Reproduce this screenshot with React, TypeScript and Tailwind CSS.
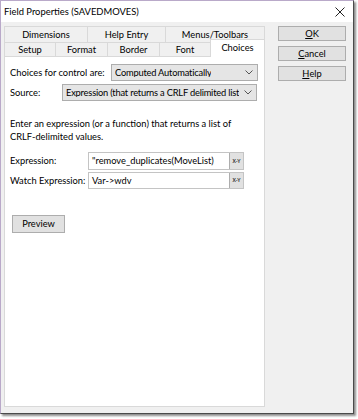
import React from "react";

const font = { fontFamily: 'Lato, "Noto Sans", sans-serif' };

function Chevron() {
    return (
        <svg width="8" height="5" viewBox="0 0 8 5" className="shrink-0">
            <polyline points="0.5,0.5 4,4 7.5,0.5" fill="none" stroke="#555" strokeWidth="1" />
        </svg>
    );
}

function Combo({ text, className }: { text: string; className: string }) {
    return (
        <div className={`flex items-center justify-between gap-[2px] bg-[#e5e5e5] border border-[#adadad] pl-[3px] pr-[4px] ${className}`}>
            <span className="whitespace-nowrap overflow-hidden tracking-[-0.2px]">{text}</span>
            <Chevron />
        </div>
    );
}

function XYButton() {
    return (
        <div className="w-[14px] h-full bg-[#e1e1e1] border-l border-[#adadad] flex items-center justify-center text-[5px] font-bold text-[#333] leading-none">
            X-Y
        </div>
    );
}

function DlgButton({ children }: { children: React.ReactNode }) {
    return (
        <div className="h-[15px] w-[68px] bg-[#e1e1e1] border border-[#adadad] flex items-center justify-center">
            {children}
        </div>
    );
}

const backTabs = [
    { label: "Dimensions", w: "w-[83px]" },
    { label: "Help Entry", w: "w-[78px]" },
    { label: "Menus/Toolbars", w: "w-[100px]" },
];

const frontTabs = [
    { label: "Setup", w: "w-[51px]" },
    { label: "Format", w: "w-[52px]" },
    { label: "Border", w: "w-[52px]" },
    { label: "Font", w: "w-[51px]" },
];

export default function App() {
    return (
        <div className="w-[358px] h-[419px] bg-white text-[9.3px] text-black leading-none whitespace-nowrap" style={font}>
            <div className="w-[354px] h-[414px] bg-[#f0f0f0] border border-[#b9a9c9] border-r-[#4a4a4a] border-b-[#4a4a4a] shadow-[2px_2px_2px_rgba(0,0,0,0.45)] flex flex-col">
                {/* title bar */}
                <div className="h-[21px] bg-white flex items-center justify-between pl-[3px] pr-[8px] shrink-0">
                    <span className="text-[9.4px]">Field Properties (SAVEDMOVES)</span>
                    <svg width="10" height="10" viewBox="0 0 10 10">
                        <path d="M0.5 0.5 L9.5 9.5 M9.5 0.5 L0.5 9.5" stroke="#222" strokeWidth="1" />
                    </svg>
                </div>

                <div className="flex flex-1 pl-[3px] pt-[4px]">
                    {/* tabs + panel */}
                    <div className="flex flex-col w-[261px]">
                        <div className="flex h-[16px]">
                            {backTabs.map((t, i) => (
                                <div
                                    key={t.label}
                                    className={`${t.w} h-full bg-[#f0f0f0] border-t border-l border-[#d9d9d9] ${i === backTabs.length - 1 ? "border-r" : ""} flex items-center justify-center`}
                                >
                                    {t.label}
                                </div>
                            ))}
                        </div>
                        <div className="flex h-[14px] relative z-10">
                            {frontTabs.map((t) => (
                                <div key={t.label} className={`${t.w} h-full bg-[#f0f0f0] border-t border-l border-[#d9d9d9] flex items-center justify-center`}>
                                    {t.label}
                                </div>
                            ))}
                            <div className="w-[55px] h-[18px] -mt-[3px] bg-white border-t border-l border-r border-[#d9d9d9] flex items-center justify-center pb-[2px]">
                                Choices
                            </div>
                        </div>
                        <div className="h-[351px] bg-white border border-[#d9d9d9] pl-[5px] pt-[7px] flex flex-col">
                            <div className="flex items-center h-[17px]">
                                <span className="w-[101px]">Choices for control are:</span>
                                <Combo text="Computed Automatically" className="w-[147px] h-[17px]" />
                            </div>
                            <div className="flex items-center h-[17px] mt-[3px]">
                                <span className="w-[52px]">Source:</span>
                                <Combo text="Expression (that returns a CRLF delimited list" className="w-[195px] h-[17px]" />
                            </div>
                            <p className="mt-[16px] leading-[13px]">
                                Enter an expression (or a function) that returns a list of
                                <br />
                                CRLF-delimited values.
                            </p>
                            <div className="flex items-center h-[18px] mt-[9px]">
                                <span className="w-[78px]">Expression:</span>
                                <div className="w-[156px] h-full flex bg-white border border-[#c4c4c4]">
                                    <span className="flex-1 pl-[3px] flex items-center">"remove_duplicates(MoveList)</span>
                                    <XYButton />
                                </div>
                            </div>
                            <div className="flex items-center h-[17px] mt-[2px]">
                                <span className="w-[78px]">Watch Expression:</span>
                                <div className="w-[156px] h-full flex bg-white border border-[#c4c4c4]">
                                    <span className="flex-1 pl-[3px] flex items-center">Var-&gt;wdv</span>
                                    <XYButton />
                                </div>
                            </div>
                            <div className="mt-[26px] ml-[2px] w-[53px] h-[18px] bg-[#e1e1e1] border border-[#adadad] flex items-center justify-center">
                                Preview
                            </div>
                        </div>
                    </div>

                    {/* dialog buttons */}
                    <div className="ml-[13px] flex flex-col gap-[5px]">
                        <DlgButton>
                            <span className="underline">O</span>K
                        </DlgButton>
                        <DlgButton>
                            <span className="underline">C</span>ancel
                        </DlgButton>
                        <DlgButton>
                            <span className="underline">H</span>elp
                        </DlgButton>
                    </div>
                </div>
            </div>
        </div>
    );
}
